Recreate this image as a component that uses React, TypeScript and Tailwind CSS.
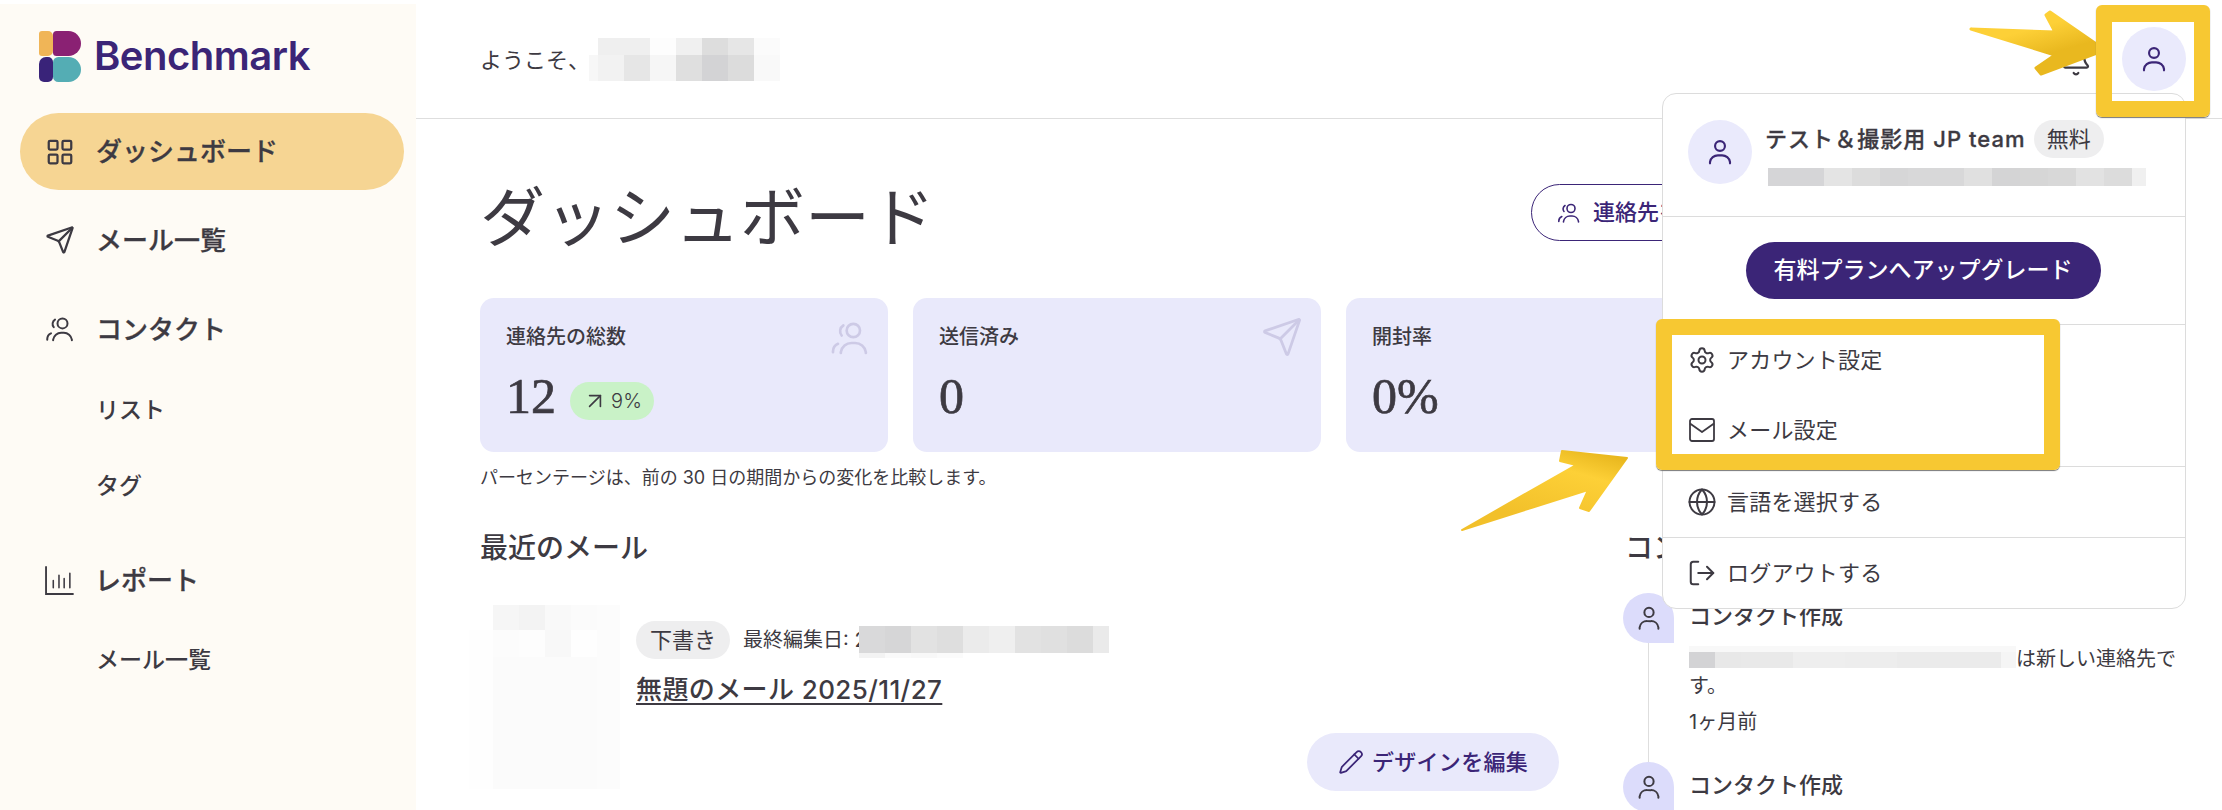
import { Bell, Globe, LayoutGrid, LogOut, Pencil, Send, Settings, ArrowUpRight } from "lucide-react";

const INK = "#3d3a42";

// blurred-out bits of the screenshot, as rows of grey cells
type Row = { h: number; cells: Array<[number, string]> };

const Pixels = ({ rows, className = "" }: { rows: Row[]; className?: string }) => (
  <div className={`flex flex-col ${className}`}>
    {rows.map((row, i) => (
      <div key={i} className="flex" style={{ height: row.h }}>
        {row.cells.map(([w, c], j) => (
          <div key={j} style={{ width: w, background: c }} />
        ))}
      </div>
    ))}
  </div>
);

const UsersIcon = ({ className }: { className?: string }) => (
  <svg viewBox="0 0 24 24" fill="none" stroke="currentColor" strokeWidth="1.6" strokeLinecap="round" className={className}>
    <circle cx="14" cy="7.5" r="4" />
    <path d="M6.5 21v-.5a6.5 6.5 0 0 1 6.5-5.5h2a6.5 6.5 0 0 1 6.5 5.500v.5" />
    <path d="M8 4.500a4 4 0 0 0-1 6" />
    <path d="M1.800 20.500v-.5a5 5 0 0 1 3-4.500" />
  </svg>
);

const UserIcon = ({ className }: { className?: string }) => (
  <svg viewBox="0 0 24 24" fill="none" stroke="currentColor" strokeWidth="1.6" strokeLinecap="round" className={className}>
    <circle cx="12" cy="7.500" r="3.700" />
    <path d="M4.500 20.500v-1a6 6 0 0 1 6-5h3a6 6 0 0 1 6 5v1" />
  </svg>
);

const ChartIcon = ({ className }: { className?: string }) => (
  <svg viewBox="0 0 28 28" fill="none" stroke="currentColor" strokeWidth="1.800" strokeLinecap="round" className={className}>
    <path d="M1 1v26h26" />
    <path d="M8 14v7M13.500 9v12M18.500 12v9M24 7v14" strokeWidth="1.500" />
  </svg>
);

const MailIcon = ({ className }: { className?: string }) => (
  <svg viewBox="0 0 26 26" fill="none" stroke="currentColor" strokeWidth="1.800" strokeLinejoin="round" className={className}>
    <rect x="1" y="2" width="24" height="22" rx="2" />
    <path d="M1 6.500L13 15L25 6.500" />
  </svg>
);

const Logo = () => (
  <div className="flex flex-col gap-[1px] w-[42px]">
    <div className="flex h-[25px]">
      <div className="w-[14px] bg-[#f0b557] rounded-l-[3px] rounded-r-[5px]" />
      <div className="flex-1 bg-[#8a2173] rounded-l-[4px] rounded-r-[14px]" />
    </div>
    <div className="flex h-[25px]">
      <div className="w-[14px] bg-[#392379] rounded-[5px] rounded-tl-[7px]" />
      <div className="flex-1 bg-[#54adb4] rounded-l-[6px] rounded-r-[14px]" />
    </div>
  </div>
);

const Sidebar = () => (
  <aside className="w-[416px] h-[806px] mt-[4px] shrink-0 bg-[#fefbf5] pl-[20px] pr-[12px]">
    <div className="flex items-center gap-[13px] pl-[19px] pt-[26px]">
      <Logo />
      <span className="text-[40px] leading-[52px] font-semibold tracking-[-0.5px] text-[#3b2577]">Benchmark</span>
    </div>
    <nav className="mt-[31px]">
      <a className="flex items-center h-[77px] rounded-full bg-[#f6d593] pl-[25px] gap-[21px] text-[26px] font-medium [-webkit-text-stroke:0.3px_#3d3a42]">
        <LayoutGrid className="w-[30px] h-[30px]" strokeWidth={1.800} />
        ダッシュボード
      </a>
      <a className="flex items-center h-[40px] mt-[30px] pl-[25px] gap-[21px] text-[26px] font-medium [-webkit-text-stroke:0.3px_#3d3a42]">
        <Send className="w-[30px] h-[30px]" strokeWidth={1.800} />
        メール一覧
      </a>
      <a className="flex items-center h-[40px] mt-[49px] pl-[25px] gap-[21px] text-[26px] font-medium [-webkit-text-stroke:0.3px_#3d3a42]">
        <UsersIcon className="w-[30px] h-[30px]" />
        コンタクト
      </a>
      <a className="block h-[30px] leading-[30px] mt-[46px] pl-[76px] text-[23px] font-medium">リスト</a>
      <a className="block h-[30px] leading-[30px] mt-[46px] pl-[76px] text-[23px] font-medium">タグ</a>
      <a className="flex items-center h-[40px] mt-[59px] pl-[25px] gap-[21px] text-[26px] font-medium [-webkit-text-stroke:0.3px_#3d3a42]">
        <ChartIcon className="w-[29px] h-[29px]" />
        レポート
      </a>
      <a className="block h-[30px] leading-[30px] mt-[45px] pl-[76px] text-[23px] font-medium">メール一覧</a>
    </nav>
  </aside>
);

const Header = () => (
  <header className="h-[119px] border-b border-[#dedede] flex items-center justify-between pl-[64px] pr-[36px]">
    <div className="flex items-center text-[22px] mt-[2px]">
      <span className="w-[109px] whitespace-nowrap">ようこそ、</span>
      <Pixels
        className="-mt-[2px]"
        rows={[
          { h: 17, cells: [[9, "#ffffff"], [26, "#efefef"], [26, "#efefef"], [26, "#fdfdfd"], [26, "#f0f0f0"], [26, "#dddddd"], [26, "#e6e6e6"], [26, "#fbfbfb"]] },
          { h: 26, cells: [[9, "#f7f7f7"], [26, "#f2f2f2"], [26, "#e6e6e6"], [26, "#f6f6f6"], [26, "#dfdfdf"], [26, "#d3d3d5"], [26, "#dcdcdc"], [26, "#f9f9f9"]] },
        ]}
      />
    </div>
    <div className="flex items-center gap-[30px]">
      <Bell className="w-[32px] h-[32px] mt-[3px]" strokeWidth={1.700} />
      <div className="w-[64px] h-[64px] rounded-full bg-[#eaeafc] flex items-center justify-center text-[#3b2577]">
        <UserIcon className="w-[32px] h-[32px]" />
      </div>
    </div>
  </header>
);

const StatCard = ({ label, value, icon, badge }: { label: string; value: string; icon: React.ReactNode; badge?: boolean }) => (
  <div className="relative w-[408px] h-[154px] rounded-[14px] bg-[#e9e9fb] pl-[26px] pt-[25px]">
    <div className="text-[20px] leading-[28px] font-medium">{label}</div>
    <div className="flex items-center mt-[21px] h-[48px]">
      <span className="font-['Liberation_Serif',serif] text-[50px] leading-[48px] [-webkit-text-stroke:0.7px_#3d3a42]">{value}</span>
      {badge && (
        <span className="ml-[14px] mt-[9px] w-[84px] h-[38px] rounded-full bg-[#c9f2c7] flex items-center justify-center gap-[3px] text-[20px] font-light">
          <ArrowUpRight className="w-[26px] h-[26px]" strokeWidth={1.500} />
          9%
        </span>
      )}
    </div>
    <div className="absolute top-[20px] right-[18px] text-[#cdcae6]">{icon}</div>
  </div>
);

const ContactItem = ({ children, line }: { children?: React.ReactNode; line?: boolean }) => (
  <div className={`flex ${line ? "h-[169px]" : ""}`}>
    <div className="w-[51px] flex flex-col items-center shrink-0">
      <div className="w-[51px] h-[50px] shrink-0 rounded-full rounded-br-[8px] bg-[#dcdcfb] flex items-center justify-center">
        <UserIcon className="w-[30px] h-[30px]" />
      </div>
      {line && <div className="w-px flex-1 bg-[#dedede]" />}
    </div>
    <div className="ml-[15px] flex-1 pt-[7px]">
      <div className="text-[22px] leading-[32px] font-medium">コンタクト作成</div>
      {children}
    </div>
  </div>
);

const Dashboard = () => (
  <div className="pl-[64px] pt-[65px]">
    <div className="flex items-center h-[57px]">
      <h1 className="text-[65px] leading-[72px] font-normal mt-[10px] whitespace-nowrap">ダッシュボード</h1>
      <button className="ml-[596px] w-[240px] h-[57px] rounded-full border border-[#3b2577] flex items-center pl-[25px] gap-[12px] text-[22px] font-medium text-[#3b2577] whitespace-nowrap">
        <UsersIcon className="w-[24px] h-[24px]" />
        連絡先を追加
      </button>
    </div>
    <div className="flex gap-[25px] mt-[57px]">
      <StatCard label="連絡先の総数" value="12" badge icon={<UsersIcon className="w-[40px] h-[40px]" />} />
      <StatCard label="送信済み" value="0" icon={<Send className="w-[42px] h-[42px] -mt-[2px]" strokeWidth={1.600} />} />
      <StatCard label="開封率" value="0%" icon={null} />
    </div>
    <p className="mt-[13px] text-[18px] leading-[26px]">パーセンテージは、前の 30 日の期間からの変化を比較します。</p>
    <div className="flex mt-[37px]">
      <section className="w-[1080px] shrink-0">
        <h2 className="text-[28px] leading-[40px] font-medium">最近のメール</h2>
        <div className="flex mt-[37px] -ml-[11px]">
          <Pixels
            className="w-[151px] shrink-0"
            rows={[
              { h: 25, cells: [[24, "#ffffff"], [26, "#f6f6f6"], [26, "#f3f3f3"], [26, "#f9f9f9"], [26, "#fbfbfb"], [23, "#fcfcfc"]] },
              { h: 27, cells: [[24, "#fefefe"], [26, "#fcfcfc"], [26, "#fdfdfd"], [26, "#f8f8f8"], [26, "#fefefe"], [23, "#fcfcfc"]] },
              { h: 132, cells: [[24, "#fefefe"], [104, "#fbfbfb"], [23, "#fcfcfc"]] },
            ]}
          />
          <div className="flex-1 ml-[16px] pt-[16px] flex flex-col">
            <div className="flex items-center h-[38px]">
              <span className="w-[94px] h-[38px] rounded-full bg-[#eeeeef] flex items-center justify-center text-[22px]">下書き</span>
              <span className="ml-[13px] w-[116px] text-[20px] whitespace-nowrap">最終編集日: 2</span>
              <Pixels
                className="relative mt-[4px]"
                rows={[
                  { h: 27, cells: [[26, "#d9d9da"], [26, "#d6d6d7"], [26, "#e2e2e2"], [26, "#dedede"], [26, "#ebebeb"], [26, "#efefef"], [26, "#e2e2e2"], [26, "#e0e0e0"], [26, "#dcdcdc"], [16, "#eaeaea"]] },
                  { h: 5, cells: [[26, "#f3f3f3"], [26, "#fafafa"], [26, "#f8f8f8"], [26, "#fbfbfb"]] },
                ]}
              />
            </div>
            <a className="self-start mt-[12px] text-[26px] leading-[38px] font-medium tracking-[0.4px] underline underline-offset-[4px]">無題のメール 2025/11/27</a>
            <button className="self-end mt-[24px] mr-[1px] w-[252px] h-[58px] rounded-full bg-[#e9e9fb] flex items-center justify-center gap-[8px] text-[22px] font-medium tracking-[0.3px] text-[#3b2577]">
              <Pencil className="w-[26px] h-[26px]" strokeWidth={1.600} />
              デザインを編集
            </button>
          </div>
        </div>
      </section>
      <section className="ml-[63px] w-[555px] shrink-0">
        <h2 className="ml-[2px] text-[28px] leading-[40px] font-medium">コンタクト</h2>
        <div className="mt-[25px]">
          <ContactItem line>
            <div className="text-[20px] leading-[27px] mt-[14px]">
              <Pixels
                className="inline-flex align-top w-[327px]"
                rows={[
                  { h: 6, cells: [[327, "#f8f8f8"]] },
                  { h: 16, cells: [[26, "#d3d3d5"], [26, "#e8e8e8"], [52, "#e9e9e9"], [52, "#eeeeee"], [52, "#ededed"], [52, "#ebebeb"], [52, "#ebebeb"], [15, "#f5f5f5"]] },
                ]}
              />
              は新しい連絡先です。
            </div>
            <div className="text-[20px] leading-[26px] mt-[9px]">1ヶ月前</div>
          </ContactItem>
          <ContactItem />
        </div>
      </section>
    </div>
  </div>
);

const MenuRow = ({ icon, label }: { icon: React.ReactNode; label: string }) => (
  <a className="flex items-center h-[70px] pl-[26px] gap-[12px] text-[22px] tracking-[0.2px]">
    <span className="w-[26px] h-[26px] flex items-center justify-center">{icon}</span>
    {label}
  </a>
);

const AccountMenu = () => (
  <div className="absolute top-[93px] right-[36px] w-[524px] h-[516px] rounded-[14px] border border-[#dcdcdc] bg-white">
    <div className="h-[123px] border-b border-[#dcdcdc] pl-[25px] pt-[26px] flex">
      <div className="w-[64px] h-[64px] rounded-full bg-[#eaeafc] flex items-center justify-center text-[#3b2577]">
        <UserIcon className="w-[32px] h-[32px]" />
      </div>
      <div className="ml-[13px]">
        <div className="flex items-center h-[38px]">
          <span className="text-[22px] font-medium tracking-[1.05px] whitespace-nowrap [-webkit-text-stroke:0.3px_#3d3a42]">テスト＆撮影用 JP team</span>
          <span className="ml-[8px] w-[70px] h-[38px] rounded-full bg-[#eeeeef] flex items-center justify-center text-[22px]">無料</span>
        </div>
        <Pixels
          className="mt-[10px] ml-[3px]"
          rows={[
            {
              h: 18,
              cells: [
                [28, "#d5d5d7"], [28, "#d5d5d7"], [28, "#e4e4e4"], [28, "#dcdcdc"], [28, "#d6d6d7"], [28, "#d8d8d9"], [28, "#d8d8d9"],
                [28, "#e0e0e0"], [28, "#d4d4d5"], [28, "#d6d6d6"], [28, "#d8d8d8"], [28, "#e2e2e2"], [28, "#dcdcdc"], [14, "#f0f0f0"],
              ],
            },
          ]}
        />
      </div>
    </div>
    <div className="h-[108px] border-b border-[#dcdcdc] flex items-center justify-center pr-[2px]">
      <button className="w-[355px] h-[57px] rounded-full bg-[#3b2577] text-white text-[23px] font-medium -mt-[1px] whitespace-nowrap">有料プランへアップグレード</button>
    </div>
    <div className="h-[142px] border-b border-[#dcdcdc]">
      <MenuRow icon={<Settings className="w-[28px] h-[28px] shrink-0" strokeWidth={1.700} />} label="アカウント設定" />
      <MenuRow icon={<MailIcon className="w-[26px] h-[26px] shrink-0" />} label="メール設定" />
    </div>
    <div className="border-b border-[#dcdcdc]">
      <MenuRow icon={<Globe className="w-[30px] h-[30px] shrink-0" strokeWidth={1.600} />} label="言語を選択する" />
    </div>
    <MenuRow icon={<LogOut className="w-[30px] h-[30px] shrink-0" strokeWidth={1.600} />} label="ログアウトする" />
  </div>
);

// yellow annotation arrows and frames pasted over the screenshot
const Annotations = () => (
  <>
    <svg className="absolute left-[1960px] top-[0px] w-[160px] h-[90px]" viewBox="1960 0 160 90">
      <defs>
        <linearGradient id="arrowA" x1="0" y1="0" x2="0.6" y2="1">
          <stop offset="0.4" stopColor="#fdd037" />
          <stop offset="0.75" stopColor="#e9b81f" />
        </linearGradient>
      </defs>
      <path d="M1971 29L2055 32L2046 15L2050 12L2105 50L2041 74L2036 68L2055 55Z" fill="url(#arrowA)" stroke="url(#arrowA)" strokeWidth="3" strokeLinejoin="round" />
    </svg>
    <svg className="absolute left-[1450px] top-[440px] w-[190px] h-[100px]" viewBox="1450 440 190 100">
      <defs>
        <linearGradient id="arrowB" x1="0.2" y1="1" x2="0.8" y2="0">
          <stop offset="0.2" stopColor="#f2c02a" />
          <stop offset="0.75" stopColor="#fdd037" />
          <stop offset="1" stopColor="#e9b81f" />
        </linearGradient>
      </defs>
      <path d="M1462 530L1576 465L1560 461L1562 451L1627 458L1589 511L1580 508L1588 490Z" fill="url(#arrowB)" stroke="url(#arrowB)" strokeWidth="2" strokeLinejoin="round" />
    </svg>
    <div className="absolute left-[2096px] top-[5px] w-[114px] h-[112px] border-x-[16px] border-t-[17px] border-b-[16px] border-[#f7c832] rounded-[6px] shadow-[0_1px_1px_#777]" />
    <div className="absolute left-[1656px] top-[319px] w-[404px] h-[151px] border-x-[16px] border-t-[16px] border-b-[16px] border-[#f7c832] rounded-[6px] shadow-[0_1px_1px_#777]" />
  </>
);

export default function App() {
  return (
    <div className="relative flex w-[2222px] h-[810px] overflow-hidden bg-white text-[#3d3a42] font-['Inter','Noto_Sans_CJK_JP',sans-serif]" style={{ color: INK }}>
      <Sidebar />
      <main className="flex-1 min-w-0">
        <Header />
        <Dashboard />
      </main>
      <AccountMenu />
      <Annotations />
    </div>
  );
}
